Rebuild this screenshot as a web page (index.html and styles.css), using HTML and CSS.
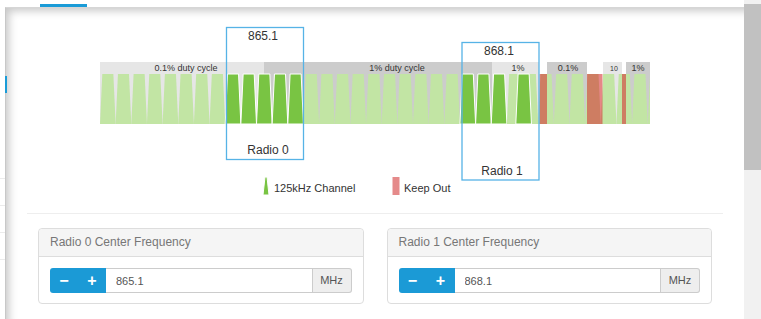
FILE: index.html
```html
<!DOCTYPE html>
<html lang="en">
<head>
    <meta charset="UTF-8">
    <meta name="viewport" content="width=device-width, initial-scale=1.0">
    <title>Channel Plan</title>
    <link rel="stylesheet" href="styles.css">
</head>
<body>

    <div class="rail"><span></span><span></span><span></span><span></span></div>

    <div class="main">
        <div class="tabs"><span class="tab-ativa"></span></div>

        <div class="painel">
            <span class="marca-lateral"></span>

            <svg class="plano" width="738" height="198" viewBox="6 8 738 198">
                <defs>
                    <clipPath id="banda">
                        <rect x="100" y="62" width="550" height="62"></rect>
                    </clipPath>
                </defs>

                <g clip-path="url(#banda)">
                    <rect class="faixa-clara" x="100" y="62" width="164" height="62"></rect>
                    <rect class="faixa-escura" x="264" y="62" width="228" height="62"></rect>
                    <rect class="faixa-clara" x="492" y="62" width="47" height="62"></rect>
                    <rect class="faixa-escura" x="547" y="62" width="40" height="62"></rect>
                    <rect class="faixa-clara" x="603" y="62" width="19" height="62"></rect>
                    <rect class="faixa-escura" x="626" y="62" width="24" height="62"></rect>

                    <g id="canais"></g>

                    <rect class="bloqueio" x="539.5" y="74" width="7.5" height="50"></rect>
                    <rect class="bloqueio" x="587" y="74" width="15.5" height="50"></rect>
                    <rect class="bloqueio" x="622" y="74" width="4" height="50"></rect>
                </g>

                <text class="rotulo-faixa" x="186" y="71">0.1% duty cycle</text>
                <text class="rotulo-faixa" x="397" y="71">1% duty cycle</text>
                <text class="rotulo-faixa" x="518" y="71">1%</text>
                <text class="rotulo-faixa" x="568" y="71">0.1%</text>
                <text class="rotulo-faixa pequeno" x="614" y="71">10</text>
                <text class="rotulo-faixa" x="638" y="71">1%</text>

                <rect class="radio-caixa" x="226.5" y="27.5" width="77" height="132"></rect>
                <text class="rotulo-radio" x="263" y="39.5">865.1</text>
                <text class="rotulo-radio" x="268" y="153.5">Radio 0</text>

                <rect class="radio-caixa" x="462" y="42.5" width="77" height="137.5"></rect>
                <text class="rotulo-radio" x="499" y="54.5">868.1</text>
                <text class="rotulo-radio" x="502" y="174.5">Radio 1</text>

                <polygon class="canal ativo" points="265,177 267,177 269,195 263,195"></polygon>
                <text class="legenda" x="274" y="192">125kHz Channel</text>
                <rect class="legenda-bloqueio" x="392.5" y="177" width="7" height="18"></rect>
                <text class="legenda" x="404" y="192">Keep Out</text>
            </svg>

            <hr class="divisor">

            <div class="radios">
                <div class="cartao">
                    <div class="cartao-topo">Radio 0 Center Frequency</div>
                    <div class="cartao-corpo">
                        <div class="frequencia">
                            <div class="passos"><button>&minus;</button><button>+</button></div>
                            <input type="text" value="865.1">
                            <span class="unidade">MHz</span>
                        </div>
                    </div>
                </div>

                <div class="cartao">
                    <div class="cartao-topo">Radio 1 Center Frequency</div>
                    <div class="cartao-corpo">
                        <div class="frequencia">
                            <div class="passos"><button>&minus;</button><button>+</button></div>
                            <input type="text" value="868.1">
                            <span class="unidade">MHz</span>
                        </div>
                    </div>
                </div>
            </div>
        </div>
    </div>

    <div class="rolagem"><div class="rolagem-barra"></div></div>

<script>
    const svgNS = "http://www.w3.org/2000/svg";
    const canais = document.getElementById("canais");
    const passo = 15.65;
    const escuros = [8, 9, 10, 11, 12, 23, 24, 25];

    function desenharCanal(x, ativo) {
        const p = document.createElementNS(svgNS, "polygon");
        p.setAttribute("points", (x + 2.3) + ",74 " + (x + 13.35) + ",74 " + (x + passo) + ",124 " + x + ",124");
        p.setAttribute("class", ativo ? "canal ativo" : "canal");
        canais.appendChild(p);
    }

    for (let n = 0; n < 36; n++) {
        desenharCanal(100 + n * passo, escuros.includes(n));
    }
    // canal extra do radio 1
    desenharCanal(515.8, true);
</script>
</body>
</html>
```

FILE: styles.css
```css
body {
    font-family: "Liberation Sans", Arial, sans-serif;
    background-color: #ffffff;
    margin: 0;
    padding: 0;
    display: flex;
    height: 319px;
    overflow: hidden;
}

.rail {
    width: 5px;
    padding-top: 152px;
}

.rail span {
    display: block;
    height: 26px;
    border-bottom: 1px solid #ebebeb;
}

.main {
    width: 739px;
    display: flex;
    flex-direction: column;
}

.tabs {
    height: 7px;
}

.tab-ativa {
    display: block;
    margin: 4px 0 0 35px;
    width: 47px;
    height: 3px;
    background-color: #1a9bd7;
}

.painel {
    flex: 1;
    position: relative;
    border-top: 1px solid #d6d6d6;
    border-left: 1px solid #c8c8c8;
    box-shadow: inset 6px 6px 8px -3px rgba(0, 0, 0, 0.22);
}

.marca-lateral {
    position: absolute;
    left: -1px;
    top: 68px;
    width: 2px;
    height: 17px;
    background-color: #1a9bd7;
}

.plano {
    display: block;
}

.faixa-clara {
    fill: #e6e6e6;
}

.faixa-escura {
    fill: #cccccc;
}

.canal {
    fill: #c2e5a4;
}

.canal.ativo {
    fill: #79c443;
    stroke: #ffffff;
    stroke-width: 1;
}

.bloqueio {
    fill: rgba(213, 55, 55, 0.6);
}

.radio-caixa {
    fill: none;
    stroke: #56b3e6;
    stroke-width: 1.3;
}

.rotulo-faixa {
    font-size: 9px;
    fill: #333333;
    text-anchor: middle;
}

.rotulo-faixa.pequeno {
    font-size: 7px;
}

.rotulo-radio {
    font-size: 12px;
    fill: #333333;
    text-anchor: middle;
}

.legenda {
    font-size: 11px;
    fill: #333333;
}

.legenda-bloqueio {
    fill: #e58a8a;
}

.divisor {
    border: 0;
    border-top: 1px solid #eeeeee;
    margin: 7px 21px 0 21px;
    height: 0;
}

.radios {
    display: grid;
    grid-template-columns: 1fr 1fr;
    gap: 23px;
    padding: 0 32px;
    margin-top: 14px;
}

.cartao {
    border: 1px solid #dddddd;
    border-radius: 4px;
    background-color: #ffffff;
}

.cartao-topo {
    background-color: #f5f5f5;
    border-bottom: 1px solid #dddddd;
    border-radius: 4px 4px 0 0;
    height: 27px;
    line-height: 27px;
    padding: 0 11px;
    font-size: 12px;
    color: #777777;
}

.cartao-corpo {
    padding: 11px 11px 10px;
}

.frequencia {
    display: flex;
    height: 25px;
}

.passos {
    display: flex;
    width: 56px;
    background-color: #1b9ad6;
    border-radius: 3px 0 0 3px;
}

.passos button {
    width: 28px;
    border: none;
    background: none;
    color: #ffffff;
    font-family: "Liberation Sans", Arial, sans-serif;
    font-size: 16px;
    font-weight: bold;
    padding: 0;
    cursor: pointer;
}

.frequencia input {
    flex: 1;
    min-width: 0;
    border: 1px solid #cccccc;
    border-left: none;
    padding: 0 10px;
    font-family: "Liberation Sans", Arial, sans-serif;
    font-size: 11px;
    color: #555555;
    outline: none;
}

.unidade {
    width: 38px;
    background-color: #eeeeee;
    border: 1px solid #cccccc;
    border-left: none;
    border-radius: 0 3px 3px 0;
    font-size: 11px;
    color: #555555;
    line-height: 23px;
    text-align: center;
}

.rolagem {
    width: 17px;
    background-color: #f1f1f1;
}

.rolagem-barra {
    margin-top: 4px;
    height: 166px;
    background-color: #c1c1c1;
}
```
